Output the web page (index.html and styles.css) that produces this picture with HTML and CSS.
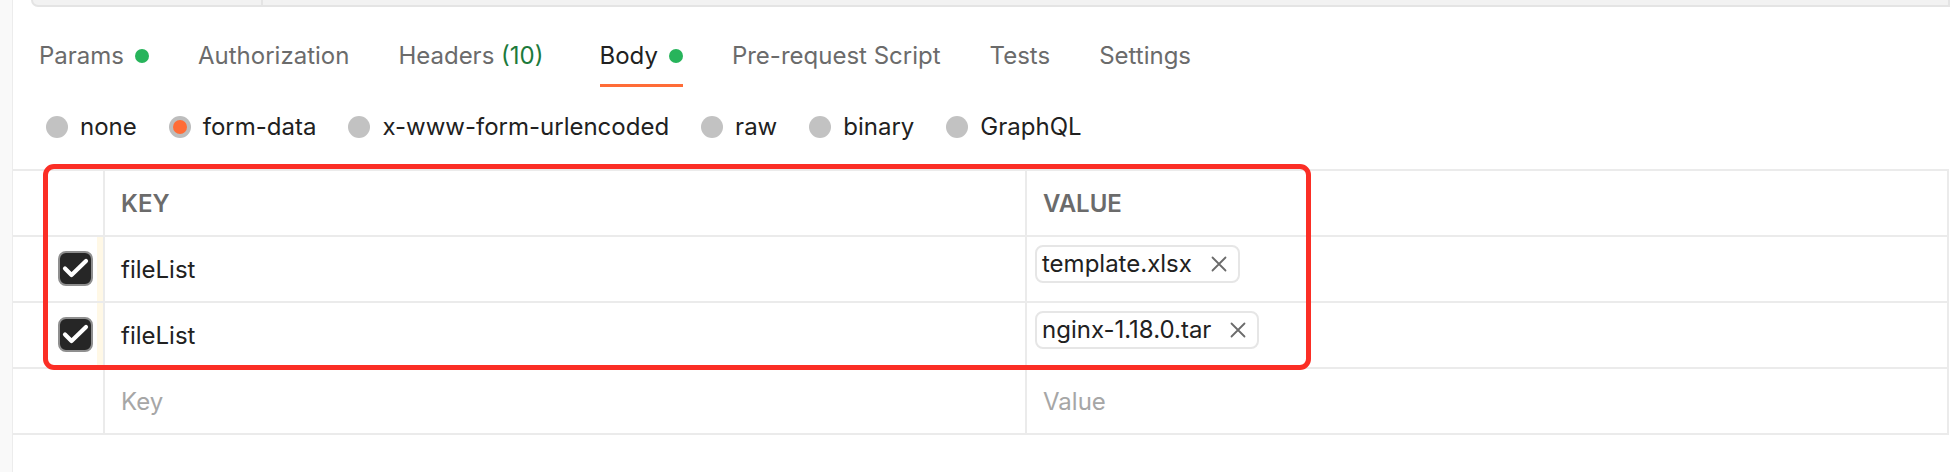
FILE: index.html
```html
<!DOCTYPE html>
<html>
<head>
<meta charset="utf-8">
<link rel="stylesheet" href="styles.css">
</head>
<body>
<div class="app">
  <div class="sidebar"></div>
  <div class="main">
    <div class="urlbar"><div class="method"></div></div>
    <div class="tabs">
      <div class="tab">Params<span class="dot"></span></div>
      <div class="tab">Authorization</div>
      <div class="tab">Headers <span class="count">(10)</span></div>
      <div class="tab active">Body<span class="dot"></span></div>
      <div class="tab">Pre-request Script</div>
      <div class="tab">Tests</div>
      <div class="tab">Settings</div>
    </div>
    <div class="radios">
      <div class="radio"><span class="circle"></span>none</div>
      <div class="radio"><span class="circle on"></span>form-data</div>
      <div class="radio"><span class="circle"></span>x-www-form-urlencoded</div>
      <div class="radio"><span class="circle"></span>raw</div>
      <div class="radio"><span class="circle"></span>binary</div>
      <div class="radio"><span class="circle"></span>GraphQL</div>
    </div>
    <div class="table">
      <div class="row head">
        <div class="cell check"></div>
        <div class="cell key">KEY</div>
        <div class="cell val">VALUE</div>
      </div>
      <div class="row">
        <div class="cell check handle">
          <svg class="cb" width="35" height="35" viewBox="0 0 35 35"><rect x="1" y="1" width="33" height="33" rx="7" fill="#262626" stroke="#8f8f8f" stroke-width="2"/><path d="M7 17.5 L13.5 24 L28 10" fill="none" stroke="#fff" stroke-width="4.2" stroke-linecap="round" stroke-linejoin="round"/></svg>
        </div>
        <div class="cell key">fileList</div>
        <div class="cell val"><span class="chip">template.xlsx<svg class="x" width="16" height="16" viewBox="0 0 16 16"><path d="M1.5 1.5 L14.5 14.5 M14.5 1.5 L1.5 14.5" stroke="#6b6b6b" stroke-width="1.8" stroke-linecap="round"/></svg></span></div>
      </div>
      <div class="row">
        <div class="cell check handle">
          <svg class="cb" width="35" height="35" viewBox="0 0 35 35"><rect x="1" y="1" width="33" height="33" rx="7" fill="#262626" stroke="#8f8f8f" stroke-width="2"/><path d="M7 17.5 L13.5 24 L28 10" fill="none" stroke="#fff" stroke-width="4.2" stroke-linecap="round" stroke-linejoin="round"/></svg>
        </div>
        <div class="cell key">fileList</div>
        <div class="cell val"><span class="chip">nginx-1.18.0.tar<svg class="x" width="16" height="16" viewBox="0 0 16 16"><path d="M1.5 1.5 L14.5 14.5 M14.5 1.5 L1.5 14.5" stroke="#6b6b6b" stroke-width="1.8" stroke-linecap="round"/></svg></span></div>
      </div>
      <div class="row">
        <div class="cell check"></div>
        <div class="cell key ph">Key</div>
        <div class="cell val ph">Value</div>
      </div>
      <div class="highlight"></div>
    </div>
  </div>
</div>
</body>
</html>
```
FILE: styles.css
```css
* { box-sizing: border-box; }
html, body { margin: 0; padding: 0; background: #fff; }
body {
  font-family: Inter, "Noto Sans", sans-serif;
  font-size: 24px;
  color: #212121;
  width: 1950px;
  height: 472px;
  overflow: hidden;
}
.app { display: flex; height: 472px; }
.sidebar {
  width: 13px;
  flex: 0 0 13px;
  background: #f9f9f9;
  border-right: 1px solid #ececec;
}
.main { flex: 1; min-width: 0; }

.urlbar {
  margin-left: 18px;
  height: 7px;
  background: #f2f2f2;
  border: 2px solid #e4e4e4;
  border-top: none;
  border-radius: 0 0 0 7px;
  display: flex;
}
.method { width: 230px; border-right: 2px solid #e4e4e4; }

.tabs {
  display: flex;
  gap: 49px;
  padding-left: 26px;
  margin-top: 34px;
}
.tab {
  display: flex;
  align-items: center;
  line-height: 30px;
  padding-bottom: 13px;
  border-bottom: 3px solid transparent;
  color: #6b6b6b;
  white-space: pre;
}
.tab.active { color: #212121; border-bottom-color: #ff6c37; margin-left: 7px; }
.count { color: #1c7a3b; }
.dot {
  width: 14px;
  height: 14px;
  border-radius: 50%;
  background: #27b45b;
  margin-left: 11px;
}

.radios {
  display: flex;
  gap: 32px;
  padding-left: 33px;
  margin-top: 25px;
  line-height: 30px;
}
.radio { display: flex; align-items: center; gap: 12px; }
.circle {
  width: 22px;
  height: 22px;
  border-radius: 50%;
  background: #c2c2c2;
  display: inline-flex;
  align-items: center;
  justify-content: center;
}
.circle.on { background: #bdbdbd; }
.circle.on::after {
  content: "";
  width: 14px;
  height: 14px;
  border-radius: 50%;
  background: #ff6c37;
}

.table {
  position: relative;
  margin-top: 27px;
  border-top: 2px solid #ebebeb;
  width: 1936px;
}
.row {
  display: grid;
  grid-template-columns: 92px 922px 922px;
  height: 66px;
  border-bottom: 2px solid #ebebeb;
}
.cell {
  border-right: 2px solid #ebebeb;
  display: flex;
  align-items: center;
  padding-left: 16px;
}
.cell.check { padding-left: 45px; }
.cell.handle { box-shadow: inset -6px 0 0 #fff8e6; }
.head .cell { font-weight: 600; color: #6b6b6b; }
.cell.val { align-items: flex-start; padding-top: 8px; padding-left: 8px; }
.head .cell.val, .ph.val { align-items: center; padding-top: 0; padding-left: 16px; }
.ph { color: #a6a6a6; }
.cb { display: block; margin-top: -2px; }

.chip {
  display: inline-flex;
  align-items: center;
  height: 38px;
  border: 2px solid #e6e6e6;
  border-radius: 8px;
  padding: 0 11px 0 5px;
  gap: 19px;
  line-height: 30px;
}
.x { display: block; }

.highlight {
  position: absolute;
  left: 30px;
  top: -7px;
  width: 1268px;
  height: 206px;
  border: 5px solid #fb2e25;
  border-radius: 11px;
  pointer-events: none;
}
```
